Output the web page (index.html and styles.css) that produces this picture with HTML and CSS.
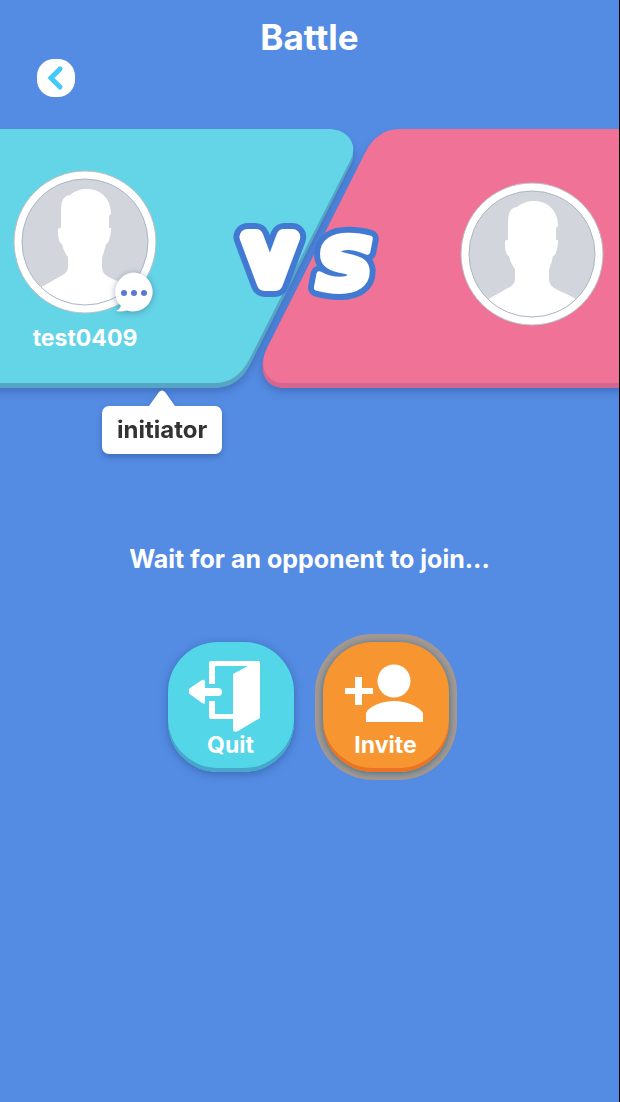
FILE: index.html
```html
<!DOCTYPE html>
<html lang="en">
<head>
<meta charset="utf-8">
<meta name="viewport" content="width=device-width, initial-scale=1">
<title>Battle</title>
<link rel="stylesheet" href="styles.css">
</head>
<body>
<svg width="0" height="0" class="symbols" aria-hidden="true">
  <defs>
    <clipPath id="face"><circle cx="72" cy="72" r="63"/></clipPath>
    <symbol id="avatar" viewBox="0 0 144 144">
      <circle cx="72" cy="72" r="71" fill="#fff" stroke="#b9bfc4" stroke-width="1"/>
      <circle cx="72" cy="72" r="63" fill="#d2d6dc"/>
      <path clip-path="url(#face)" fill="#fff" d="M48 42C48 29 51 26 57 25C63 20 69 19 74 19C88 19 98 29 98 44L96 46V58Q99 57 98 61C97 68 96 73 93 74C92 80 90 84 89 88V97Q89 103 94 106C101 110 110 113 119 119V140H25V119L48 106Q55 103 55 97V87C52 83 50 79 49 74C46 73 45 68 45 61Q45 57 48 58Z"/>
      <circle cx="72" cy="72" r="63" fill="none" stroke="#a9b6c3" stroke-width="1"/>
    </symbol>
  </defs>
</svg>
<header class="header">
  <h1 class="title">Battle</h1>
  <button class="back" type="button" aria-label="Back">
    <svg width="38" height="38" viewBox="0 0 38 38" aria-hidden="true"><path d="M23 10L14 19L23 28" fill="none" stroke="#45c8fa" stroke-width="5" stroke-linecap="round"/></svg>
  </button>
</header>
<main>
  <section class="arena" aria-label="Players">
    <svg class="panels" viewBox="0 0 619 259" aria-hidden="true">
      <path class="panel-shade teal-shade" d="M-20 5H328C348 5 358 20 351 35L251 234C243 250 232 259 214 259H-20Z"/>
      <path fill="#64d4e7" d="M-20 0H328C348 0 358 15 351 30L249 231C241 246 230 254 214 254H-20Z"/>
      <path class="panel-shade pink-shade" d="M640 5H400C384 5 373 12 366 26L267 220C257 240 264 259 284 259H640Z"/>
      <path fill="#f07296" d="M640 0H400C384 0 373 9 366 22L267 219C257 239 268 254 284 254H640Z"/>
    </svg>
    <div class="players">
      <div class="player host">
        <div class="portrait">
          <svg class="avatar" aria-hidden="true"><use href="#avatar"/></svg>
          <button class="chat" type="button" aria-label="Chat">
            <svg width="42" height="42" viewBox="0 0 42 42" aria-hidden="true"><path fill="#fff" d="M21 1.500A19.500 19.500 0 1 1 14 39.500Q8 41 3 40Q7 38 8 35A19.500 19.500 0 0 1 21 1.500Z"/><g fill="#5c78d4"><circle cx="11" cy="22" r="3"/><circle cx="21" cy="22" r="3"/><circle cx="31" cy="22" r="3"/></g></svg>
          </button>
        </div>
        <span class="name">test0409</span>
      </div>
      <svg class="versus" viewBox="0 0 164 80" role="img" aria-label="VS">
        <defs>
          <text id="vee" class="vee" x="18" y="57">v</text>
          <text id="ess" class="ess" x="89" y="64">s</text>
        </defs>
        <g class="edge"><use href="#vee" stroke-width="28"/><use href="#ess" stroke-width="18"/></g>
        <g class="fill"><use href="#vee" stroke-width="16"/><use href="#ess" stroke-width="6"/></g>
      </svg>
      <div class="player">
        <svg class="avatar" role="img" aria-label="Empty seat"><use href="#avatar"/></svg>
      </div>
    </div>
  </section>
  <div class="role">
    <svg class="role-tip" viewBox="0 0 26 16" aria-hidden="true"><path fill="#fff" d="M0 16L10 2Q13 -1 16 2L26 16Z"/></svg>
    <span class="role-label">initiator</span>
  </div>
  <p class="status">Wait for an opponent to join...</p>
  <div class="actions">
    <button class="action quit" type="button">
      <svg class="action-icon" viewBox="0 0 84 76" aria-hidden="true"><path transform="translate(-4 -1)" fill="#fff" d="M24 4Q24 2 26 2H73Q75 2 75 4V59L53 72Q48 74 48 70V60H26Q24 60 24 58V42H30V55H48V15L63 7H30V25H24ZM2 33Q1 32 2 31L17 21Q20 20 20 23V29H33Q37 29 37 33Q37 37 33 37H20V43Q20 46 17 44Z"/></svg>
      <span>Quit</span>
    </button>
    <button class="action invite" type="button">
      <svg class="action-icon" viewBox="0 0 84 76" aria-hidden="true"><g fill="#fff"><circle cx="50" cy="21" r="16.500"/><path d="M22 62V53C25 46 38 41 50 41S75 46 79 53V62ZM11 17H18V28H29V34H18V45H11V34H1V28H11Z"/></g></svg>
      <span>Invite</span>
    </button>
  </div>
</main>
</body>
</html>
```
FILE: styles.css
```css
* {
  box-sizing: border-box;
}

body {
  margin: 0;
  min-height: 100vh;
  border-right: 1px solid #000;
  background: #548ce3;
  color: #fff;
  font-family: Inter, "Liberation Sans", sans-serif;
  font-weight: 700;
  overflow-x: hidden;
}

button {
  border: 0;
  padding: 0;
  color: inherit;
  font: inherit;
  cursor: pointer;
}

svg {
  display: block;
}

.symbols {
  position: absolute;
}

.header {
  padding: 16px 37px 32px;
}

.title {
  margin: 0;
  font-size: 35px;
  line-height: 42px;
  text-align: center;
}

.back {
  display: block;
  width: 38px;
  height: 38px;
  margin-top: 1px;
  border-radius: 17px;
  background: #fff;
}

.arena {
  display: grid;
}

.panels,
.players {
  grid-area: 1 / 1;
}

.panels {
  width: 100%;
  overflow: visible;
}

.panel-shade {
  filter: drop-shadow(0 3px 5px rgba(30, 60, 130, 0.4));
}

.teal-shade {
  fill: #56a5c5;
}

.pink-shade {
  fill: #d46792;
}

.players {
  position: relative;
  display: flex;
  align-items: center;
  justify-content: space-between;
  padding: 0 15px 10px 13px;
}

.player {
  display: flex;
  flex-direction: column;
  align-items: center;
  gap: 10px;
}

.host {
  margin-top: 14px;
}

.portrait {
  position: relative;
}

.avatar {
  width: 144px;
  height: 144px;
}

.chat {
  position: absolute;
  right: 2px;
  bottom: 1px;
  background: none;
  filter: drop-shadow(0 1px 3px rgba(60, 90, 130, 0.5));
}

.name {
  font-size: 23px;
  line-height: 28px;
}

.versus {
  width: 164px;
  height: 80px;
  margin-top: 24px;
  overflow: visible;
  font-family: "DejaVu Sans", sans-serif;
  stroke-linejoin: round;
}

.vee {
  font-size: 84px;
  font-weight: 400;
}

.ess {
  font-size: 96px;
  font-weight: 700;
  font-style: oblique;
}

.edge {
  fill: #427ad3;
  stroke: #427ad3;
}

.fill {
  fill: #fff;
  stroke: #fff;
}

.role {
  display: flex;
  flex-direction: column;
  align-items: center;
  width: max-content;
  margin: 2px 0 0 102px;
  filter: drop-shadow(0 3px 3px rgba(30, 60, 130, 0.4));
}

.role-tip {
  width: 26px;
  height: 16px;
}

.role-label {
  padding: 9px 15px;
  border-radius: 7px;
  background: #fff;
  color: #333;
  font-size: 24px;
  line-height: 30px;
}

.status {
  margin: 88px 16px 66px;
  font-size: 25px;
  line-height: 34px;
  text-align: center;
}

.actions {
  display: flex;
  justify-content: center;
  gap: 29px;
  padding-right: 3px;
}

.action {
  display: flex;
  flex-direction: column;
  align-items: center;
  width: 126px;
  height: 130px;
  padding-top: 18px;
  border-radius: 50px;
  font-size: 23px;
  line-height: 28px;
}

.action-icon {
  width: 84px;
  height: 76px;
  margin-bottom: -5px;
}

.quit {
  background: #53d6e8;
  box-shadow: inset 0 -4px #48a5cc, 0 2px 8px rgba(30, 70, 130, 0.5);
}

.invite {
  background: #f79631;
  box-shadow: inset 0 -4px #eb7324, 0 1px 7px rgba(30, 110, 150, 0.9), 0 0 0 8px #a89890;
}
```
